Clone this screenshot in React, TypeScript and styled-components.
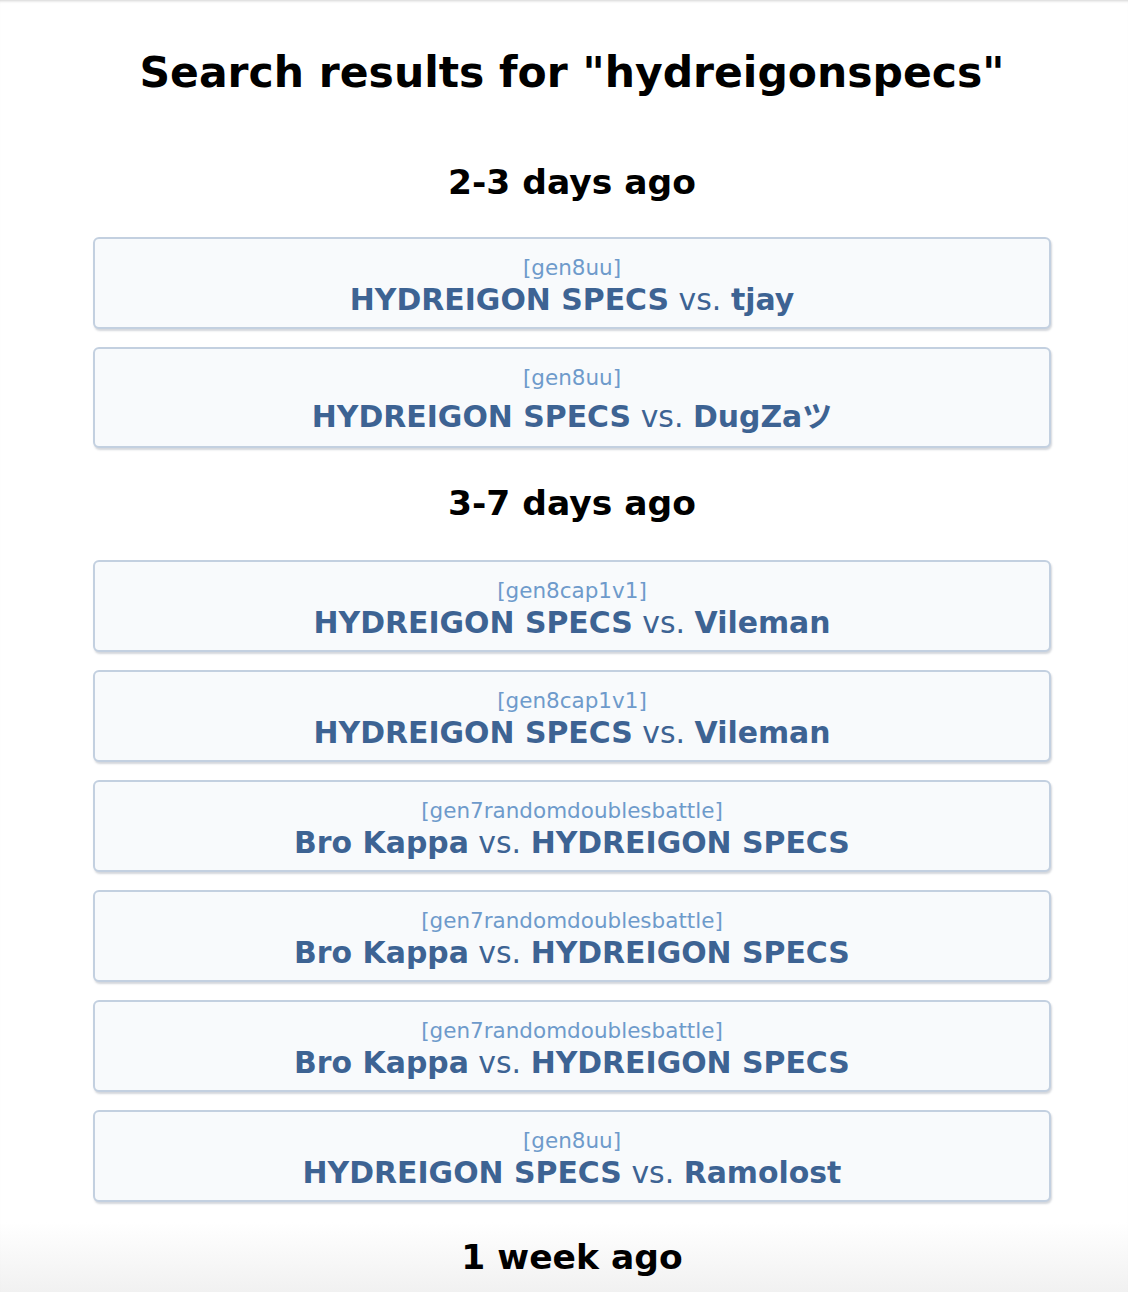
import React from "react";
import styled, { createGlobalStyle } from "styled-components";

const Global = createGlobalStyle`
  html, body { margin: 0; padding: 0; background: #fff; }
  body { font-family: "DejaVu Sans", Verdana, "Noto Sans CJK JP", sans-serif; }
`;

const Page = styled.div`
  position: relative;
  height: 1292px;
  overflow: hidden;
  background: linear-gradient(to bottom, #ffffff 0, #ffffff 1222px, #f1f1f1 1292px);
  box-shadow: inset 0 3px 3px -2px rgba(0, 0, 0, 0.18);
`;

const Content = styled.main`
  width: 958px;
  margin-left: 93px;
  display: flex;
  flex-direction: column;
`;

const Title = styled.h1`
  margin: 46px 0 0;
  font-size: 42.5px;
  line-height: 54px;
  font-weight: bold;
  text-align: center;
  color: #000;
`;

const GroupTitle = styled.h2<{ $first?: boolean }>`
  margin: ${(p) => (p.$first ? "60px 0 33px" : "33px 0 35px")};
  font-size: 34.5px;
  line-height: 44px;
  font-weight: bold;
  text-align: center;
  color: #000;
`;

const List = styled.ul`
  list-style: none;
  margin: 0;
  padding: 0;
  display: flex;
  flex-direction: column;
  gap: 18px;
`;

const Card = styled.li`
  box-sizing: border-box;
  padding: 16px 0 10px;
  border: 2px solid #c3d0e0;
  border-radius: 6px;
  background: #f8fafc;
  box-shadow: 1px 2px 2px rgba(100, 110, 130, 0.28);
  display: flex;
  flex-direction: column;
  align-items: center;
  color: #3d6393;
`;

const Format = styled.small`
  font-size: 21.5px;
  line-height: 25px;
  color: #6e9acb;
`;

const Players = styled.div`
  margin-top: 2px;
  font-size: 29.9px;
  line-height: normal;
`;

const Name = styled.strong`
  font-weight: bold;
`;

type Battle = { format: string; p1: string; p2: string };

const groups: { label: string; battles: Battle[] }[] = [
  {
    label: "2-3 days ago",
    battles: [
      { format: "gen8uu", p1: "HYDREIGON SPECS", p2: "tjay" },
      { format: "gen8uu", p1: "HYDREIGON SPECS", p2: "DugZa\u30c4" },
    ],
  },
  {
    label: "3-7 days ago",
    battles: [
      { format: "gen8cap1v1", p1: "HYDREIGON SPECS", p2: "Vileman" },
      { format: "gen8cap1v1", p1: "HYDREIGON SPECS", p2: "Vileman" },
      { format: "gen7randomdoublesbattle", p1: "Bro Kappa", p2: "HYDREIGON SPECS" },
      { format: "gen7randomdoublesbattle", p1: "Bro Kappa", p2: "HYDREIGON SPECS" },
      { format: "gen7randomdoublesbattle", p1: "Bro Kappa", p2: "HYDREIGON SPECS" },
      { format: "gen8uu", p1: "HYDREIGON SPECS", p2: "Ramolost" },
    ],
  },
  { label: "1 week ago", battles: [] },
];

export default function App() {
  return (
    <Page>
      <Global />
      <Content>
        <Title>Search results for "hydreigonspecs"</Title>
        {groups.map((g, gi) => (
          <section key={g.label}>
            <GroupTitle $first={gi === 0}>{g.label}</GroupTitle>
            <List>
              {g.battles.map((b, i) => (
                <Card key={i}>
                  <Format>[{b.format}]</Format>
                  <Players>
                    <Name>{b.p1}</Name> vs. <Name>{b.p2}</Name>
                  </Players>
                </Card>
              ))}
            </List>
          </section>
        ))}
      </Content>
    </Page>
  );
}
